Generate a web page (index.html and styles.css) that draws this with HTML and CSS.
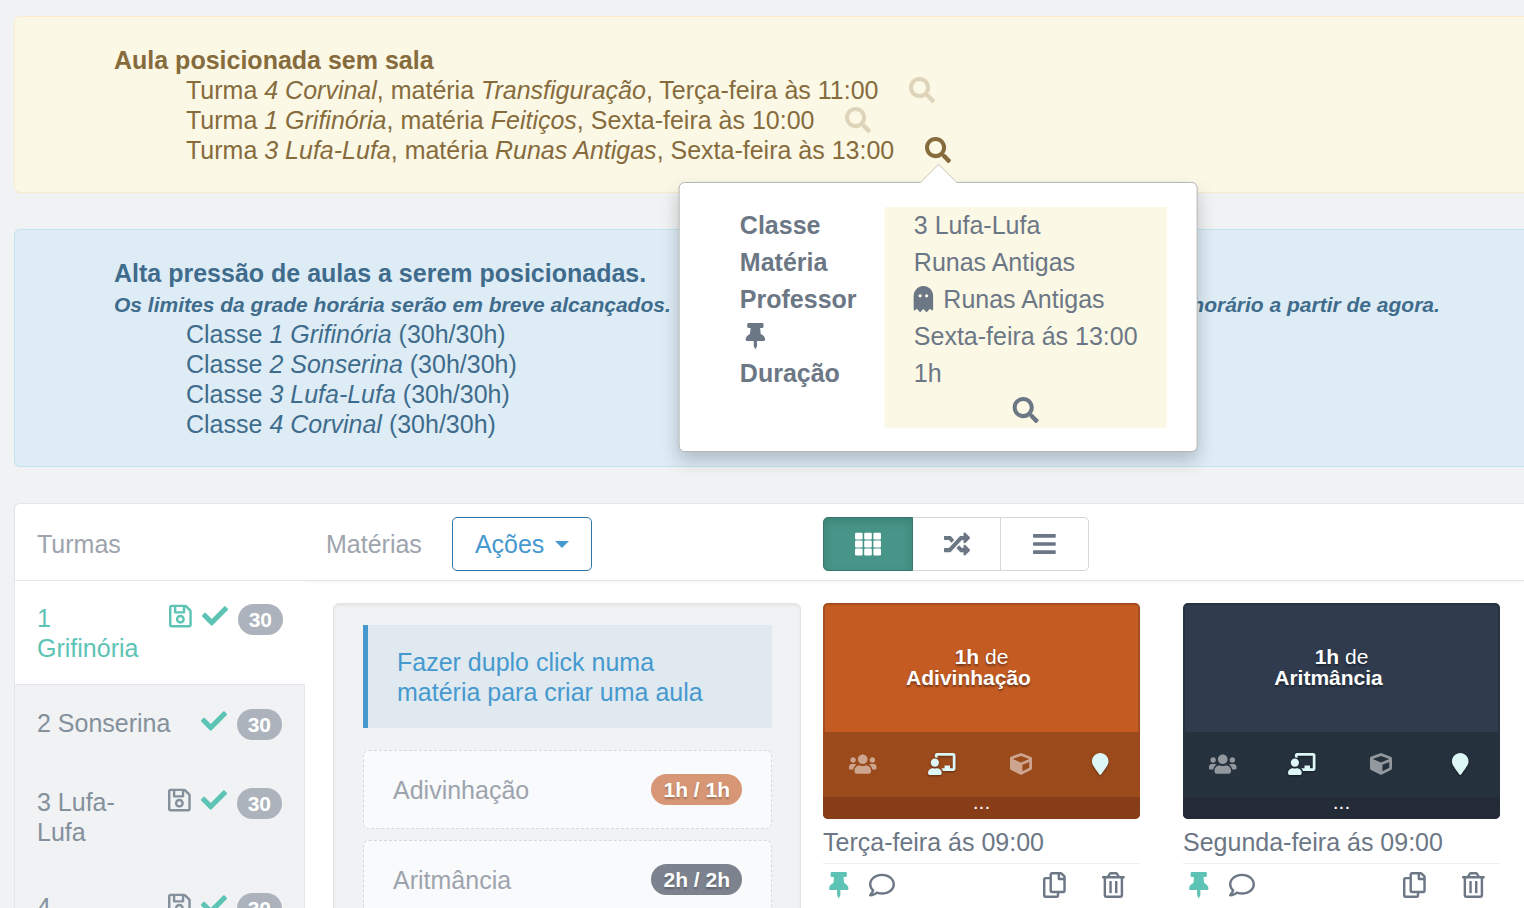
FILE: index.html
```
<!DOCTYPE html>
<html lang="pt">
<head>
<meta charset="UTF-8" />
<meta name="viewport" content="width=device-width, initial-scale=1" />
<title>Grade horária</title>
<link rel="stylesheet" href="styles.css">
</head>
<body>

<!-- Icon sprite -->
<svg class="sprite" aria-hidden="true">
  <symbol id="search" viewBox="0 0 512 512"><path d="M505 442.7L405.3 343c-4.5-4.5-10.6-7-17-7H372c27.6-35.3 44-79.7 44-128C416 93.1 322.9 0 208 0S0 93.1 0 208s93.1 208 208 208c48.3 0 92.7-16.4 128-44v16.3c0 6.4 2.5 12.5 7 17l99.7 99.7c9.4 9.4 24.6 9.4 33.9 0l28.3-28.3c9.4-9.4 9.4-24.6.1-34zM208 336c-70.7 0-128-57.2-128-128 0-70.7 57.2-128 128-128 70.7 0 128 57.2 128 128 0 70.7-57.2 128-128 128z"/></symbol>
  <symbol id="check" viewBox="0 0 512 512"><path d="M173.9 439.4l-166.4-166.4c-10-10-10-26.2 0-36.2l36.2-36.2c10-10 26.2-10 36.2 0L192 312.7 432.1 72.6c10-10 26.2-10 36.2 0l36.2 36.2c10 10 10 26.2 0 36.2l-294.4 294.4c-10 10-26.2 10-36.2 0z"/></symbol>
  <symbol id="pin" viewBox="0 0 384 512"><path d="M298 214.3L285.8 96H328c13.3 0 24-10.7 24-24V24c0-13.3-10.7-24-24-24H56C42.7 0 32 10.7 32 24v48c0 13.3 10.7 24 24 24h42.2L86 214.3C37.5 236.8 0 277.3 0 328c0 13.3 10.7 24 24 24h136v104c0 1.2.3 2.5.8 3.6l24 48c2.9 5.9 11.4 5.9 14.3 0l24-48c.6-1.1.9-2.3.9-3.6V352h136c13.3 0 24-10.7 24-24 0-51.2-38-91.4-86-113.7z"/></symbol>
  <symbol id="ghost" viewBox="0 0 384 512"><path d="M186.1.1C81 3.2 0 94.9 0 200v264c0 14.3 17.2 21.4 27.3 11.3l24.9-18.5c6.7-5 16-4 21.5 2.2l43 48.3c6.2 6.3 16.4 6.3 22.6 0l40.7-45.8c6.4-7.2 17.6-7.2 24 0l40.7 45.8c6.2 6.3 16.4 6.3 22.6 0l43-48.3c5.5-6.2 14.8-7.2 21.5-2.2l24.9 18.5c10 10 27.3 2.9 27.3-11.3V192C384 84 294.8-3.2 186.1.1zM128 224c-17.7 0-32-14.3-32-32s14.3-32 32-32 32 14.3 32 32-14.3 32-32 32zm128 0c-17.7 0-32-14.3-32-32s14.3-32 32-32 32 14.3 32 32-14.3 32-32 32z"/></symbol>
  <symbol id="save" viewBox="0 0 448 512"><path d="M433.9 129.9l-83.8-83.8A48 48 0 0 0 316.1 32H48C21.5 32 0 53.5 0 80v352c0 26.5 21.5 48 48 48h352c26.5 0 48-21.5 48-48V163.9a48 48 0 0 0-14.1-34zM272 80v80H144V80h128zm122 352H54a6 6 0 0 1-6-6V86a6 6 0 0 1 6-6h42v104c0 13.3 10.7 24 24 24h176c13.3 0 24-10.7 24-24V83.9l78.2 78.2a6 6 0 0 1 1.8 4.3V426a6 6 0 0 1-6 6zM224 232c-48.5 0-88 39.5-88 88s39.5 88 88 88 88-39.5 88-88-39.5-88-88-88zm0 128c-22 0-40-18-40-40s18-40 40-40 40 18 40 40-18 40-40 40z"/></symbol>
  <symbol id="random" viewBox="0 0 512 512"><path d="M505 359c9.4 9.4 9.4 24.6 0 34l-80 80c-15 15-41 4.500-41-17V416h-58.800a12 12 0 0 1-8.800-3.800l-70.500-75.600 53.300-57.200L352 336h32v-40c0-21.400 26-32 41-17l80 80zM12 176h84l52.800 56.600 53.300-57.200-70.500-75.600A12 12 0 0 0 122.800 96H12c-6.600 0-12 5.400-12 12v56c0 6.600 5.400 12 12 12zm372 0v40c0 21.500 26 32 41 17l80-80c9.400-9.400 9.400-24.600 0-34l-80-80C410 24 384 34.600 384 56v40h-58.800a12 12 0 0 0-8.800 3.800L96 336H12c-6.600 0-12 5.400-12 12v56c0 6.600 5.400 12 12 12h110.800c3.300 0 6.500-1.400 8.800-3.800L352 176h32z"/></symbol>
  <symbol id="grid" viewBox="0 0 512 512"><rect y="32" width="150" height="134" rx="24"/><rect x="181" y="32" width="150" height="134" rx="24"/><rect x="362" y="32" width="150" height="134" rx="24"/><rect y="189" width="150" height="134" rx="24"/><rect x="181" y="189" width="150" height="134" rx="24"/><rect x="362" y="189" width="150" height="134" rx="24"/><rect y="346" width="150" height="134" rx="24"/><rect x="181" y="346" width="150" height="134" rx="24"/><rect x="362" y="346" width="150" height="134" rx="24"/></symbol>
  <symbol id="bars" viewBox="0 0 448 512"><rect y="60" width="448" height="72" rx="16"/><rect y="220" width="448" height="72" rx="16"/><rect y="380" width="448" height="72" rx="16"/></symbol>
  <symbol id="users" viewBox="0 0 640 512"><path d="M96 224c35.300 0 64-28.700 64-64s-28.700-64-64-64-64 28.700-64 64 28.700 64 64 64zm448 0c35.300 0 64-28.700 64-64s-28.700-64-64-64-64 28.700-64 64 28.700 64 64 64zm32 32h-64c-17.600 0-33.500 7.100-45.100 18.600 40.300 22.100 68.900 62 75.100 109.400h66c17.700 0 32-14.300 32-32v-32c0-35.300-28.700-64-64-64zm-256 0c61.900 0 112-50.100 112-112S381.900 32 320 32 208 82.100 208 144s50.100 112 112 112zm76.800 32h-8.300c-20.800 10-43.900 16-68.500 16s-47.600-6-68.500-16h-8.300C179.600 288 128 339.600 128 403.200V432c0 26.500 21.500 48 48 48h288c26.500 0 48-21.500 48-48v-28.800c0-63.600-51.600-115.200-115.200-115.200zm-223.700-13.400C161.500 263.100 145.600 256 128 256H64c-35.300 0-64 28.700-64 64v32c0 17.700 14.300 32 32 32h65.900c6.300-47.400 34.900-87.300 75.200-109.400z"/></symbol>
  <symbol id="teacher" viewBox="0 0 640 512"><path d="M208 352c-2.400 0-4.800.4-7.100 1.100C188 357.300 174.400 360 160 360s-28-2.700-41-6.900c-2.200-.7-4.600-1.100-7-1.100C50 352-.3 402.500 0 464.600.1 490.900 21.700 512 48 512h224c26.300 0 47.900-21.100 48-47.400.3-62.100-50-112.600-112-112.600zm-48-32c53 0 96-43 96-96s-43-96-96-96-96 43-96 96 43 96 96 96zM592 0H208c-26.500 0-48 22.300-48 49.600V96c23.400 0 45.100 6.800 64 17.800V64h352v288h-64v-64H384v64h-76.200c19 16.700 33 38.700 39.600 64H592c26.500 0 48-22.300 48-49.600V49.600C640 22.300 618.500 0 592 0z"/></symbol>
  <symbol id="cube" viewBox="0 0 512 512"><path d="M239.100 6.300l-208 78c-18.700 7-31.100 25-31.100 45v225.100c0 18.200 10.300 34.800 26.500 42.900l208 104c13.500 6.800 29.400 6.800 42.900 0l208-104c16.300-8.100 26.500-24.800 26.500-42.900V129.300c0-20-12.400-37.900-31.100-44.900l-208-78C262 2.200 250 2.200 239.100 6.300zM256 68.400l192 72v1.100l-192 78-192-78v-1.100l192-72zm32 356V275.500l160-65v133.900l-160 80z"/></symbol>
  <symbol id="marker" viewBox="0 0 384 512"><path d="M172.300 501.700C27 291 0 269.400 0 192 0 86 86 0 192 0s192 86 192 192c0 77.400-27 99-172.300 309.700-9.500 13.700-29.900 13.700-39.400 0z"/></symbol>
  <symbol id="comment" viewBox="0 0 512 512"><path d="M256 32C114.600 32 0 125.100 0 240c0 47.600 19.900 91.200 52.900 126.300C38 405.700 7 439.100 6.500 439.500c-6.600 7-8.400 17.200-4.600 26S14.400 480 24 480c61.500 0 110-25.700 139.100-46.300C192 442.800 223.200 448 256 448c141.400 0 256-93.100 256-208S397.400 32 256 32zm0 368c-26.700 0-53.100-4.100-78.400-12.100l-22.700-7.200-19.500 13.800c-14.300 10.100-33.900 21.400-57.500 29 7.300-12.100 14.400-25.700 19.900-40.200l10.600-28.100-20.600-21.800C69.700 314.100 48 282.200 48 240c0-88.200 93.300-160 208-160s208 71.800 208 160-93.300 160-208 160z"/></symbol>
  <symbol id="copy" viewBox="0 0 448 512"><path d="M433.900 65.900l-51.800-51.800A48 48 0 0 0 348.100 0H176c-26.500 0-48 21.500-48 48v48H48c-26.500 0-48 21.500-48 48v320c0 26.500 21.500 48 48 48h224c26.500 0 48-21.500 48-48v-48h80c26.500 0 48-21.500 48-48V99.900a48 48 0 0 0-14.100-34zM266 464H54a6 6 0 0 1-6-6V150a6 6 0 0 1 6-6h74v224c0 26.500 21.500 48 48 48h96v42a6 6 0 0 1-6 6zm128-96H182a6 6 0 0 1-6-6V54a6 6 0 0 1 6-6h106v88c0 13.300 10.700 24 24 24h88v202a6 6 0 0 1-6 6zm6-256h-64V48h9.600c1.600 0 3.100.6 4.300 1.800l48.300 48.300a6 6 0 0 1 1.800 4.300V112z"/></symbol>
  <symbol id="trash" viewBox="0 0 448 512"><path d="M268 416h24a12 12 0 0 0 12-12V188a12 12 0 0 0-12-12h-24a12 12 0 0 0-12 12v216a12 12 0 0 0 12 12zM432 80h-82.400l-34-56.700A48 48 0 0 0 274.400 0H173.600a48 48 0 0 0-41.200 23.300L98.400 80H16A16 16 0 0 0 0 96v16a16 16 0 0 0 16 16h16v336a48 48 0 0 0 48 48h288a48 48 0 0 0 48-48V128h16a16 16 0 0 0 16-16V96a16 16 0 0 0-16-16zM171.800 50.900A6 6 0 0 1 177 48h94a6 6 0 0 1 5.200 2.900L293.600 80H154.400zM368 464H80V128h288zm-212-48h24a12 12 0 0 0 12-12V188a12 12 0 0 0-12-12h-24a12 12 0 0 0-12 12v216a12 12 0 0 0 12 12z"/></symbol>
</svg>

<main class="page">
  <section class="alert alert-warning">
    <h4>Aula posicionada sem sala</h4>
    <ul>
      <li>Turma <em>4 Corvinal</em>, matéria <em>Transfiguração</em>, Terça-feira às 11:00
        <span class="locate"><button type="button" class="icon-btn faded" aria-label="Ver aula"><svg class="icon" viewBox="0 0 512 512"><use href="#search"/></svg></button></span></li>
      <li>Turma <em>1 Grifinória</em>, matéria <em>Feitiços</em>, Sexta-feira às 10:00
        <span class="locate"><button type="button" class="icon-btn faded" aria-label="Ver aula"><svg class="icon" viewBox="0 0 512 512"><use href="#search"/></svg></button></span></li>
      <li>Turma <em>3 Lufa-Lufa</em>, matéria <em>Runas Antigas</em>, Sexta-feira às 13:00
        <span class="locate"><button type="button" class="icon-btn" aria-label="Ver aula"><svg class="icon" viewBox="0 0 512 512"><use href="#search"/></svg></button>
          <div class="popover" role="tooltip">
            <dl>
              <dt>Classe</dt><dd>3 Lufa-Lufa</dd>
              <dt>Matéria</dt><dd>Runas Antigas</dd>
              <dt>Professor</dt><dd><svg class="icon ghost" viewBox="0 0 384 512"><use href="#ghost"/></svg>Runas Antigas</dd>
              <dt><svg class="icon pin" viewBox="0 0 384 512"><use href="#pin"/></svg></dt><dd>Sexta-feira ás 13:00</dd>
              <dt>Duração</dt><dd>1h</dd>
              <dd class="popover-action"><button type="button" class="icon-btn" aria-label="Localizar"><svg class="icon" viewBox="0 0 512 512"><use href="#search"/></svg></button></dd>
            </dl>
          </div>
        </span></li>
    </ul>
  </section>

  <section class="alert alert-info">
    <h4>Alta pressão de aulas a serem posicionadas.</h4>
    <p><span>Os limites da grade horária serão em breve alcançados.</span><span>Não será mais possível incluir novas aulas no seu horário a partir de agora.</span></p>
    <ul>
      <li>Classe <em>1 Grifinória</em> (30h/30h)</li>
      <li>Classe <em>2 Sonserina</em> (30h/30h)</li>
      <li>Classe <em>3 Lufa-Lufa</em> (30h/30h)</li>
      <li>Classe <em>4 Corvinal</em> (30h/30h)</li>
    </ul>
  </section>

  <section class="panel">
    <header class="panel-header">
      <h5>Turmas</h5>
      <div class="subjects-head">
        <h5>Matérias</h5>
        <button type="button" class="btn-actions">Ações <span class="caret"></span></button>
      </div>
      <div class="btn-group">
        <button type="button" class="active" aria-label="Grade"><svg class="icon" viewBox="0 0 512 512"><use href="#grid"/></svg></button>
        <button type="button" aria-label="Misturar"><svg class="icon" viewBox="0 0 512 512"><use href="#random"/></svg></button>
        <button type="button" aria-label="Lista"><svg class="icon" viewBox="0 0 448 512"><use href="#bars"/></svg></button>
      </div>
    </header>

    <div class="panel-body">
      <nav class="tabs">
        <a href="#t1" class="tab active">
          <span class="tab-name">1 Grifinória</span>
          <svg class="icon" viewBox="0 0 448 512"><use href="#save"/></svg>
          <svg class="icon ok" viewBox="0 0 512 512"><use href="#check"/></svg>
          <span class="badge">30</span>
        </a>
        <a href="#t2" class="tab">
          <span class="tab-name">2 Sonserina</span>
          <svg class="icon ok" viewBox="0 0 512 512"><use href="#check"/></svg>
          <span class="badge">30</span>
        </a>
        <a href="#t3" class="tab">
          <span class="tab-name">3 Lufa-Lufa</span>
          <svg class="icon" viewBox="0 0 448 512"><use href="#save"/></svg>
          <svg class="icon ok" viewBox="0 0 512 512"><use href="#check"/></svg>
          <span class="badge">30</span>
        </a>
        <a href="#t4" class="tab">
          <span class="tab-name">4 Corvinal</span>
          <svg class="icon" viewBox="0 0 448 512"><use href="#save"/></svg>
          <svg class="icon ok" viewBox="0 0 512 512"><use href="#check"/></svg>
          <span class="badge">30</span>
        </a>
      </nav>

      <div class="subjects">
        <div class="well">
          <p class="callout">Fazer duplo click numa matéria para criar uma aula</p>
          <ul class="subject-list">
            <li>Adivinhação <span class="badge badge-orange">1h / 1h</span></li>
            <li>Aritmância <span class="badge badge-slate">2h / 2h</span></li>
          </ul>
        </div>
      </div>

      <div class="lessons">
        <article class="lesson orange">
          <div class="lesson-card">
            <div class="lesson-title"><span><b>1h</b> de</span><b class="lesson-name">Adivinhação</b></div>
            <div class="lesson-icons">
              <svg class="icon off" viewBox="0 0 640 512"><use href="#users"/></svg>
              <svg class="icon" viewBox="0 0 640 512"><use href="#teacher"/></svg>
              <svg class="icon off" viewBox="0 0 512 512"><use href="#cube"/></svg>
              <svg class="icon" viewBox="0 0 384 512"><use href="#marker"/></svg>
            </div>
            <button type="button" class="lesson-more">...</button>
          </div>
          <p class="lesson-time">Terça-feira ás 09:00</p>
          <div class="lesson-tools">
            <button type="button" class="icon-btn ok" aria-label="Fixar"><svg class="icon" viewBox="0 0 384 512"><use href="#pin"/></svg></button>
            <button type="button" class="icon-btn" aria-label="Comentar"><svg class="icon" viewBox="0 0 512 512"><use href="#comment"/></svg></button>
            <button type="button" class="icon-btn copy" aria-label="Copiar"><svg class="icon" viewBox="0 0 448 512"><use href="#copy"/></svg></button>
            <button type="button" class="icon-btn" aria-label="Apagar"><svg class="icon" viewBox="0 0 448 512"><use href="#trash"/></svg></button>
          </div>
        </article>

        <article class="lesson slate">
          <div class="lesson-card">
            <div class="lesson-title"><span><b>1h</b> de</span><b class="lesson-name">Aritmância</b></div>
            <div class="lesson-icons">
              <svg class="icon off" viewBox="0 0 640 512"><use href="#users"/></svg>
              <svg class="icon" viewBox="0 0 640 512"><use href="#teacher"/></svg>
              <svg class="icon off" viewBox="0 0 512 512"><use href="#cube"/></svg>
              <svg class="icon" viewBox="0 0 384 512"><use href="#marker"/></svg>
            </div>
            <button type="button" class="lesson-more">...</button>
          </div>
          <p class="lesson-time">Segunda-feira ás 09:00</p>
          <div class="lesson-tools">
            <button type="button" class="icon-btn ok" aria-label="Fixar"><svg class="icon" viewBox="0 0 384 512"><use href="#pin"/></svg></button>
            <button type="button" class="icon-btn" aria-label="Comentar"><svg class="icon" viewBox="0 0 512 512"><use href="#comment"/></svg></button>
            <button type="button" class="icon-btn copy" aria-label="Copiar"><svg class="icon" viewBox="0 0 448 512"><use href="#copy"/></svg></button>
            <button type="button" class="icon-btn" aria-label="Apagar"><svg class="icon" viewBox="0 0 448 512"><use href="#trash"/></svg></button>
          </div>
        </article>
      </div>
    </div>
  </section>
</main>

</body>
</html>
```
FILE: styles.css
```
*, *::before, *::after {
  box-sizing: border-box;
  margin: 0; padding: 0;
}
:root {
  --bg: #f0f2f4;
  --text: #6c7785;
  --muted: #9da4ad;
  --line: #e3e6ea;
  --teal: #5cc3b5;
  --blue: #4699cf;
}
html {
  height: 100%;
  overflow: hidden;
}
body {
  font-family: "Liberation Sans", Arial, sans-serif;
  font-size: 25px;
  line-height: 30px;
  background: var(--bg);
  color: var(--text);
}
button {
  font: inherit;
  color: inherit;
  background: none;
  border: none;
  cursor: pointer;
}
ul {
  list-style: none;
}
.sprite {
  display: none;
}
symbol {
  overflow: visible;
}
.icon {
  height: 26px;
  fill: currentColor;
  flex: none;
  overflow: visible;
}
.icon-btn {
  display: inline-flex;
}
.faded {
  opacity: 0.25;
}
.ok {
  color: var(--teal);
}
.page {
  padding: 16px 0 0 14px;
}

/* Alerts */
.alert {
  border: 1px solid;
  border-right: none;
  border-radius: 6px 0 0 6px;
  padding: 28px 60px 27px 99px;
  margin-bottom: 36px;
}
.alert h4 {
  font-size: 25px;
}
.alert p {
  display: flex;
  gap: 14px;
  padding-top: 2px;
  font-size: 21px;
  line-height: 29px;
  font-weight: bold;
  font-style: italic;
  white-space: nowrap;
}
.alert ul {
  padding-left: 72px;
}
.alert-warning {
  background: #fbf8e5;
  border-color: #f9ebcc;
  color: #866b3d;
}
.alert-info {
  background: #deecf6;
  border-color: #c1e5ee;
  color: #3f6c8c;
}
.locate {
  display: inline-flex;
  align-items: center;
  position: relative;
  vertical-align: top;
  height: 30px;
  margin-left: 24px;
}

/* Popover */
.popover {
  position: absolute;
  top: 100%;
  left: 50%;
  transform: translateX(-50%);
  margin-top: 17px;
  padding: 24px 30px 23px 60px;
  background: #fff;
  border: 1px solid #b4b6b3;
  border-radius: 6px;
  box-shadow: 0 9px 18px rgba(0, 0, 0, 0.2);
  color: var(--text);
  white-space: nowrap;
  z-index: 10;
}
.popover::before {
  content: "";
  position: absolute;
  top: -14px;
  left: 50%;
  width: 26px;
  height: 26px;
  margin-left: -13px;
  background: #fff;
  border: solid #d6d3c6;
  border-width: 1px 0 0 1px;
  transform: rotate(45deg);
}
.popover dl {
  display: grid;
  grid-template-columns: 145px auto;
  line-height: 37px;
}
.popover dt {
  font-weight: bold;
}
.popover dd {
  grid-column: 2;
  padding: 0 29px;
  background: #fbf8e5;
}
.popover .ghost, .popover .pin {
  vertical-align: -4px;
}
.ghost {
  margin-right: 10px;
}
.pin {
  margin-left: 6px;
}
.popover-action {
  display: flex;
  align-items: center;
  justify-content: center;
  height: 36px;
}

/* Panel */
.panel {
  border: 1px solid var(--line);
  border-right: none;
  border-radius: 6px 0 0 0;
  background: #fff;
}
.panel-header, .panel-body {
  display: grid;
  grid-template-columns: 290px 496px 1fr;
}
.panel-header {
  height: 77px;
  padding-top: 4px;
  align-items: center;
  border-bottom: 1px solid var(--line);
  box-shadow: 0 2px 3px rgba(0, 0, 0, 0.03);
}
h5 {
  font-size: 25px;
  font-weight: normal;
  color: var(--muted);
}
.panel-header > h5 {
  padding-left: 22px;
}
.subjects-head {
  display: flex;
  align-items: center;
  gap: 30px;
  padding-left: 21px;
}
.btn-actions {
  display: flex;
  align-items: center;
  gap: 11px;
  height: 54px;
  padding: 0 22px;
  border: 1px solid #2f75a8;
  border-radius: 5px;
  color: var(--blue);
}
.caret {
  border: 7px solid transparent;
  border-top-color: currentColor;
  border-bottom: none;
}
.btn-group {
  display: flex;
  margin-left: 22px;
}
.btn-group button {
  display: flex;
  align-items: center;
  justify-content: center;
  width: 88px;
  height: 54px;
  border: 1px solid #d3d6dc;
  border-left: none;
}
.btn-group button:first-child {
  width: 90px;
  border-radius: 5px 0 0 5px;
}
.btn-group button:last-child {
  border-radius: 0 5px 5px 0;
}
.btn-group .active {
  background: #479588;
  border: 1px solid #34766b;
  box-shadow: inset 0 4px 8px rgba(0, 0, 0, 0.13);
  color: #fff;
}

/* Class tabs */
.tabs {
  background: var(--bg);
  border-right: 1px solid var(--line);
}
.tab {
  display: flex;
  align-items: flex-start;
  padding: 23px 22px 22px;
  color: #84909c;
  text-decoration: none;
}
.tab-name {
  flex: 1;
  min-height: 34px;
  padding-right: 25px;
}
.tab.active {
  padding-top: 22px;
  padding-bottom: 21px;
  margin-right: -1px;
  background: #fff;
  border-bottom: 1px solid var(--line);
  color: var(--teal);
}
.tab .icon + .icon {
  margin-left: 10px;
}
.badge {
  margin-left: 10px;
  padding: 0 11px;
  border-radius: 16px;
  background: #adb3bd;
  color: #fff;
  font-size: 21px;
  line-height: 31px;
  font-weight: bold;
}
.tab .badge {
  margin-top: 1px;
}

/* Subjects */
.subjects {
  padding: 22px 0 0 28px;
}
.well {
  padding: 21px 28px 21px 29px;
  background: var(--bg);
  border: 1px solid #e1e3e5;
  border-radius: 6px;
  box-shadow: inset 0 2px 3px rgba(0, 0, 0, 0.05);
}
.callout {
  padding: 22px 29px 21px;
  border-left: 5px solid var(--blue);
  background: #dfe9ef;
  color: var(--blue);
  margin-bottom: 22px;
}
.subject-list li {
  display: flex;
  align-items: center;
  justify-content: space-between;
  height: 79px;
  padding: 0 29px;
  margin-bottom: 11px;
  border: 1px dashed #d5d8db;
  border-radius: 6px;
  background: #f9fafc;
  color: var(--muted);
}
.badge-orange, .badge-slate {
  padding: 0 12px;
  text-shadow: 0 2px 2px rgba(0, 0, 0, 0.25);
}
.badge-orange {
  background: #d79776;
}
.badge-slate {
  background: #7c838f;
}

/* Lessons */
.lessons {
  display: grid;
  grid-template-columns: 1fr 1fr;
  gap: 43px;
  padding: 22px 24px 0 22px;
}
.lesson-card {
  border-radius: 5px;
  overflow: hidden;
  background: var(--card);
  box-shadow: inset 0 0 0 2px rgba(0, 0, 0, 0.15);
  color: #fff;
  font-size: 21px;
  line-height: 21px;
}
.orange {
  --card: #c35b23;
  --card-mid: #9b4a1c;
  --card-low: #883d19;
}
.slate {
  --card: #303c4e;
  --card-mid: #25313d;
  --card-low: #232b37;
}
.lesson-title {
  display: flex;
  flex-direction: column;
  align-items: center;
  justify-content: center;
  height: 129px;
  padding-bottom: 2px;
  text-shadow: 0 2px 2px rgba(0, 0, 0, 0.4);
}
.lesson-name {
  padding-right: 26px;
}
.lesson-icons {
  display: grid;
  grid-template-columns: repeat(4, 1fr);
  place-items: center;
  height: 65px;
  padding-bottom: 2px;
  background: var(--card-mid);
  color: #dcf7f6;
}
.lesson-icons .icon {
  height: 22px;
  filter: drop-shadow(0 1px 1px rgba(0, 0, 0, 0.4));
}
.lesson-icons .off {
  color: #fff;
  opacity: 0.5;
  filter: none;
}
.lesson-more {
  display: block;
  width: 100%;
  height: 22px;
  padding-bottom: 12px;
  background: var(--card-low);
  line-height: 10px;
}
.lesson-time {
  padding: 8px 0 6px;
  border-bottom: 1px solid #edeeef;
}
.lesson-tools {
  display: flex;
  align-items: center;
  gap: 20px;
  padding: 8px 15px 8px 6px;
}
.copy {
  margin-left: auto;
  margin-right: 17px;
}
```
